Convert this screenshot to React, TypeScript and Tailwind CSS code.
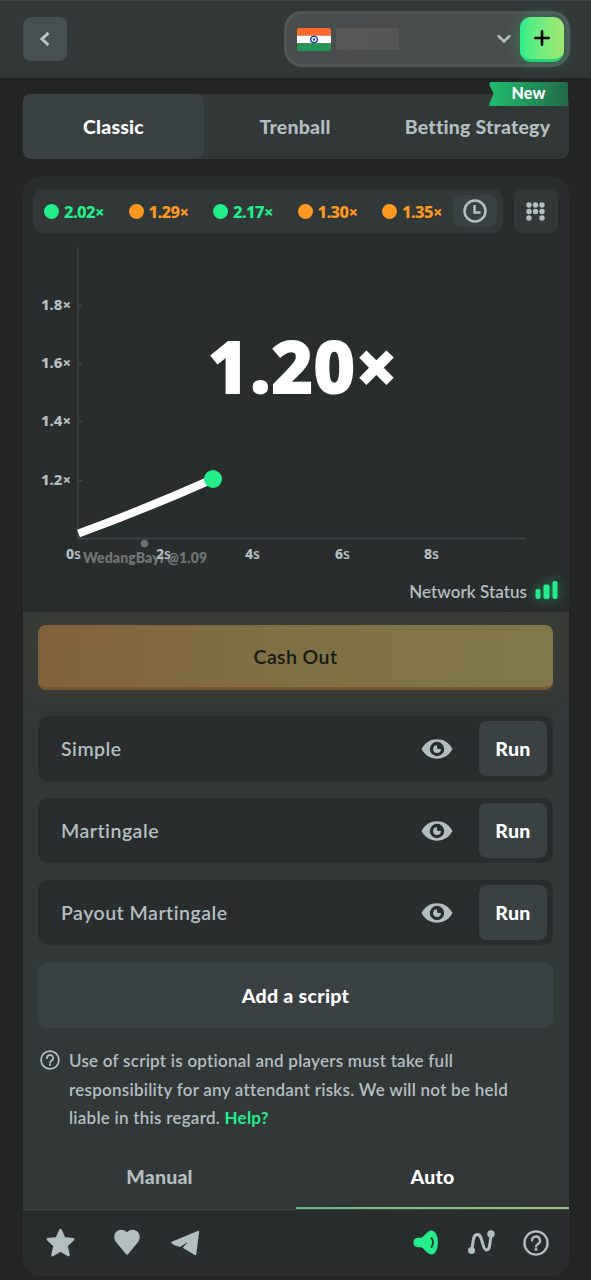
import { ReactNode } from "react"
import { clsx } from "clsx"

const history = [
  { value: "2.02×", win: true },
  { value: "1.29×", win: false },
  { value: "2.17×", win: true },
  { value: "1.30×", win: false },
  { value: "1.35×", win: false },
]

const yTicks = [
  { label: "1.8×", y: 129 },
  { label: "1.6×", y: 187 },
  { label: "1.4×", y: 245 },
  { label: "1.2×", y: 304 },
]

const xTicks = [
  { label: "0", x: 43 },
  { label: "2", x: 133 },
  { label: "4", x: 222 },
  { label: "6", x: 312 },
  { label: "8", x: 401 },
]

const scripts = ["Simple", "Martingale", "Payout Martingale"]

function IndiaFlag() {
  return (
    <svg width="34" height="23" viewBox="0 0 34 24" preserveAspectRatio="none">
      <clipPath id="flag">
        <rect width="34" height="24" rx="2" />
      </clipPath>
      <g clipPath="url(#flag)">
        <rect width="34" height="8" fill="#fb6a2b" />
        <rect y="8" width="34" height="8" fill="#fff" />
        <rect y="16" width="34" height="8" fill="#249552" />
      </g>
      <circle cx="17" cy="12" r="3.3" fill="#fff" stroke="#1b3aa0" strokeWidth="1.4" />
      <circle cx="17" cy="12" r="1.2" fill="#1b3aa0" />
    </svg>
  )
}

function EyeIcon() {
  return (
    <svg width="32" height="20" viewBox="0 0 32 20" fill="#b3bec1">
      <path d="M.5 10C4 3.5 9.500.3 16 .3S28 3.500 31.500 10C28 16.500 22.500 19.700 16 19.700S4 16.500.5 10Z" />
      <circle cx="16" cy="10" r="7.200" fill="#292d2e" />
      <path d="M16 6.200a3.900 3.900 0 1 0 3.900 3.900h-2.200q-1.700 0-1.700-1.700Z" />
    </svg>
  )
}

function HelpIcon({ size, stroke }: { size: number; stroke: number }) {
  return (
    <svg width={size} height={size} viewBox="0 0 26 26" fill="none" stroke="#b3bec1" strokeWidth={stroke}>
      <circle cx="13" cy="13" r="11.600" />
      <path d="M9 10.600a4 4 0 1 1 6 3.400c-1.200.7-2 1.300-2 2.600" strokeLinecap="round" />
      <circle cx="13" cy="19.500" r="1.400" fill="#b3bec1" stroke="none" />
    </svg>
  )
}

function Header() {
  return (
    <header className="flex h-[78px] items-center justify-between border-t border-[#3d4445] bg-[#323738] pr-[21px] pl-[23px]">
      <button className="mb-px flex h-11 w-11 items-center justify-center rounded-lg bg-[#465052]">
        <svg width="12" height="16" viewBox="0 0 12 16" fill="none" stroke="#b9c4c7" strokeWidth="3">
          <path d="M9.500 1.800 3 8l6.500 6.200" />
        </svg>
      </button>
      <div className="mb-px flex h-14 w-[286px] items-center rounded-[18px] border-[3px] border-[#515656] bg-[#484c4c] pl-[10px]">
        <IndiaFlag />
        <div className="ml-[5px] h-[22px] w-[63px] bg-linear-to-r from-[#595856] to-[#525655]" />
        <svg className="ml-[98px]" width="14" height="10" viewBox="0 0 14 10" fill="none" stroke="#b3bec1" strokeWidth="2.600">
          <path d="M1 1.500 7 7.500l6-6" />
        </svg>
        <button className="ml-[9px] flex h-[45px] w-11 items-center justify-center rounded-[11px] border-b-[3px] border-[#1fd777] bg-linear-to-r from-[#24ee89] to-[#9fe871] shadow-[0_0_16px_rgba(36,238,137,0.3)]">
          <svg className="mt-px" width="16" height="16" viewBox="0 0 16 16" stroke="#060806" strokeWidth="2.600" strokeLinecap="round">
            <path d="M8 1.300v13.400M1.300 8h13.400" />
          </svg>
        </button>
      </div>
    </header>
  )
}

function GameTabs() {
  return (
    <nav className="relative mt-4 flex h-[65px] items-center rounded-lg bg-[#323738] text-[19.500px] font-black tracking-[0.200px] text-[#b3bec1]">
      <div className="flex h-full w-[181px] items-center justify-center rounded-lg bg-[#3a4142] pt-px text-white">
        Classic
      </div>
      <div className="w-[182px] pt-px text-center">Trenball</div>
      <div className="w-[183px] pt-px text-center whitespace-nowrap">Betting Strategy</div>
      <div className="absolute -top-3 right-px flex h-6 w-[79px] items-center justify-center">
        <svg className="absolute inset-0" width="79" height="24" viewBox="0 0 79 24">
          <defs>
            <linearGradient id="ribbon">
              <stop offset="0" stopColor="#20bd6c" />
              <stop offset="1" stopColor="#236b48" />
            </linearGradient>
          </defs>
          <path d="M2 0h75q2 0 2 2v22H2Q-.5 23.500.5 21.500L4.500 12 .5 3Q0 .5 2 0Z" fill="url(#ribbon)" />
        </svg>
        <span className="relative mb-[3px] text-base font-black text-white">New</span>
      </div>
    </nav>
  )
}

function HistoryBar() {
  return (
    <div className="flex gap-[11px] px-[10px] pt-[13px]">
      <div className="flex h-11 w-[470px] shrink-0 items-center rounded-[10px] bg-[#323738] pr-[6px] pl-[11px]">
        <div className="flex min-w-0 flex-1">
          {history.map((round, i) => (
            <div
              key={i}
              className={clsx(
                "flex w-[84.500px] shrink-0 items-center gap-[5px] font-['Noto_Sans'] text-[16.500px] font-extrabold tracking-[-0.600px]",
                round.win ? "text-[#24ee89]" : "text-[#ff9820]",
              )}
            >
              <span className="h-[15px] w-[15px] rounded-full bg-current" />
              <span className="pt-[3px]">{round.value}</span>
            </div>
          ))}
        </div>
        <div className="flex h-8 w-11 shrink-0 items-center justify-center rounded-lg bg-[#3a4142]">
          <svg width="24" height="24" viewBox="0 0 24 24" fill="none" stroke="#b3bec1" strokeWidth="2.500">
            <circle cx="12" cy="12" r="10.500" />
            <path d="M11.500 6v7.500h6" />
          </svg>
        </div>
      </div>
      <div className="flex h-11 w-11 items-center justify-center rounded-lg bg-[#323738]">
        <svg className="mr-px" width="19" height="19" viewBox="0 0 19 19" fill="#b3bec1">
          {[3, 9.5, 16].map((y) =>
            [3, 9.5, 16].map((x) => (x === 9.5 && y === 16 ? null : <circle key={`${x}-${y}`} cx={x} cy={y} r="2.700" />)),
          )}
        </svg>
      </div>
    </div>
  )
}

function Chart() {
  return (
    <svg className="-mt-[57px] block" width="546" height="400" viewBox="0 0 546 400">
      <g stroke="#414647" strokeWidth="1.500">
        <path d="M55 71v291.500h448" fill="none" />
        {yTicks.map((tick) => (
          <path key={tick.label} d={`M55 ${tick.y + 0.5}h4`} />
        ))}
      </g>
      <g fill="#b3bec1" className="font-['Noto_Sans'] text-[14.500px] font-extrabold">
        {yTicks.map((tick) => (
          <text key={tick.label} x="18" y={tick.y + 5} textLength="30" lengthAdjust="spacingAndGlyphs">
            {tick.label}
          </text>
        ))}
        {xTicks.map((tick) => (
          <text key={tick.label} x={tick.x} y="382.500" textLength="15" lengthAdjust="spacingAndGlyphs">
            {tick.label}
            <tspan className="font-semibold">s</tspan>
          </text>
        ))}
      </g>
      <path d="M55 362V357L190 303V362Z" fill="#24ee89" opacity="0.006" />
      <path d="M55.500 357.500Q125 332 190 303" fill="none" stroke="#fff" strokeWidth="8" />
      <circle cx="190" cy="303" r="9" fill="#24ee89" />
      <circle cx="121.500" cy="367.500" r="3.800" fill="#6c7070" />
      <text x="60" y="387" textLength="124" fill="#a0a5a5" fillOpacity="0.600" className="text-sm font-extrabold">
        WedangBayi @1.09
      </text>
      <g fill="#fff" stroke="#fff" strokeWidth="2" className="font-['Noto_Sans'] text-[71px] font-extrabold">
        <text x="185" y="216.500" textLength="189">
          1.20×
        </text>
      </g>
    </svg>
  )
}

function NetworkStatus() {
  return (
    <div className="-mt-[2px] flex h-9 items-center justify-end gap-2 pr-[11px] text-[17px] font-semibold text-[#b3bec1]">
      <span className="tracking-[0.050px]">Network Status</span>
      <svg
        className="mb-[5px] drop-shadow-[0_0_6px_rgba(36,238,137,0.500)]"
        width="23"
        height="18"
        viewBox="0 0 23 18"
        fill="#24ee89"
      >
        <rect x=".5" y="8" width="5" height="10" rx="2" />
        <rect x="8.500" y="3.500" width="6" height="14.500" rx="2" />
        <rect x="17.500" y="0" width="5" height="18" rx="2" />
      </svg>
    </div>
  )
}

function ScriptRow({ name }: { name: string }) {
  return (
    <div className="flex h-[65px] items-center rounded-[10px] bg-[#292d2e] pr-[6px] pl-[23px]">
      <span className="flex-1 text-[19.500px] font-semibold tracking-[0.500px] text-[#b3bec1]">{name}</span>
      <EyeIcon />
      <button className="ml-[26px] h-[55px] w-[68px] rounded-lg bg-[#3a4142] text-[19.500px] font-black tracking-[0.300px] text-white">
        Run
      </button>
    </div>
  )
}

function FooterIcon({ className, children }: { className: string; children: ReactNode }) {
  return <div className={clsx("flex items-center justify-center", className)}>{children}</div>
}

function Footer() {
  return (
    <footer className="flex h-[66px] items-center bg-[#292d2e] pr-[20px] pb-px pl-[23px]">
      <FooterIcon className="w-[29px]">
        <svg width="29" height="30" viewBox="0 0 29 30" fill="#b3bec1" stroke="#b3bec1" strokeWidth="2.500" strokeLinejoin="round">
          <path d="m14.500 2 3.700 8.300 9 1-6.700 6.300 2 9.500-8-4.600-8 4.600 2-9.500L1.800 11.300l9-1Z" />
        </svg>
      </FooterIcon>
      <FooterIcon className="ml-[38px] w-[28px]">
        <svg width="28" height="27" viewBox="0 0 28 27" fill="#b3bec1">
          <path d="M14 3.200C17.500-.5 22.800.1 25.300 3.500c2.500 3.600 1.500 7.500-.9 10.200L15 25.300q-1 1-2 0L3.600 13.700C1.200 11 .2 7.100 2.700 3.500 5.200.1 10.500-.5 14 3.200Z" />
        </svg>
      </FooterIcon>
      <FooterIcon className="ml-[30px] w-[29px]">
        <svg width="29" height="26" viewBox="0 0 29 26" fill="#b3bec1" stroke="#b3bec1" strokeWidth="1.500" strokeLinejoin="round">
          <path d="M27.500 1.500 1 12.500q1 2.200 8 3.500L21.500 8 12.800 17.500 24.500 24.500Z" />
        </svg>
      </FooterIcon>
      <div className="flex-1" />
      <svg width="26" height="25" viewBox="0 0 26 25" fill="#24ee89">
        <path d="M4.500 7.800h3.500C12 6.500 14 .5 18.500.5c8.500 0 8.500 24 0 24-4.500 0-6.500-6-10.500-7.300H4.500c-5.500 0-5.500-9.400 0-9.400Z" />
        <path d="M18.500 8q3 4.500 0 9" fill="none" stroke="#292d2e" strokeWidth="1.800" strokeLinecap="round" />
      </svg>
      <svg className="ml-[28px]" width="29" height="25" viewBox="0 0 29 25" fill="none" stroke="#b3bec1" strokeWidth="3">
        <path d="M4.500 20C6.500 15 5 4.500 10.500 4.500S15 20 19.500 20 22.500 9 24.500 5" />
        <circle cx="4.500" cy="20.500" r="3.500" fill="#b3bec1" stroke="none" />
        <circle cx="24" cy="4" r="3.700" fill="#b3bec1" stroke="none" />
      </svg>
      <div className="ml-[27px]">
        <HelpIcon size={26} stroke={2.3} />
      </div>
    </footer>
  )
}

export default function App() {
  return (
    <div className="h-[1280px] w-[591px] overflow-hidden bg-[#232524] font-[Lato,'Noto_Sans',sans-serif] [font-variant-ligatures:none]">
      <Header />
      <main className="ml-[23px] w-[546px]">
        <GameTabs />
        <section className="mt-[17px] overflow-hidden rounded-[18px] bg-[#292d2e]">
          <div className="h-[436px]">
            <HistoryBar />
            <Chart />
            <NetworkStatus />
          </div>
          <div className="bg-[#323738]">
            <div className="bg-linear-to-b from-[#373b37] to-[#323738] to-[110px] pt-[13px] pr-4 pl-[15px]">
              <button className="block h-[65px] w-full rounded-lg border-b-[3px] border-[#79562c] bg-linear-to-r from-[#80623d] via-[#817045] to-[#80784b] pt-[2px] text-[19.500px] font-semibold tracking-[0.400px] text-[#171a18] shadow-[0_4px_20px_rgba(91,83,43,0.300)]">
                Cash Out
              </button>
              <div className="mt-[26px] flex flex-col gap-[17px]">
                {scripts.map((name) => (
                  <ScriptRow key={name} name={name} />
                ))}
                <button className="mt-px h-[65px] rounded-lg bg-[#3a4142] pt-px text-[19.500px] font-black tracking-[0.300px] text-white">
                  Add a script
                </button>
              </div>
              <div className="flex gap-[9px] pt-[19px] pl-[2px]">
                <div className="pt-[3px]">
                  <HelpIcon size={20} stroke={2.3} />
                </div>
                <p className="text-[17px] leading-[28.700px] font-semibold tracking-[0.250px] whitespace-nowrap text-[#b3bec1]">
                  Use of script is optional and players must take full
                  <br />
                  responsibility for any attendant risks. We will not be held
                  <br />
                  liable in this regard. <span className="font-bold text-[#24ee89]">Help?</span>
                </p>
              </div>
            </div>
            <div className="mt-[11px] flex h-[66px] border-b border-[#414647] text-[19.500px] font-black tracking-[0.200px] text-[#b3bec1]">
              <div className="flex flex-1 items-center justify-center">Manual</div>
              <div className="relative flex flex-1 items-center justify-center text-white">
                Auto
                <span className="absolute inset-x-0 bottom-0 h-[2px] bg-linear-to-r from-[#52bd82] to-[#9fc07a]" />
              </div>
            </div>
          </div>
          <Footer />
        </section>
      </main>
    </div>
  )
}
